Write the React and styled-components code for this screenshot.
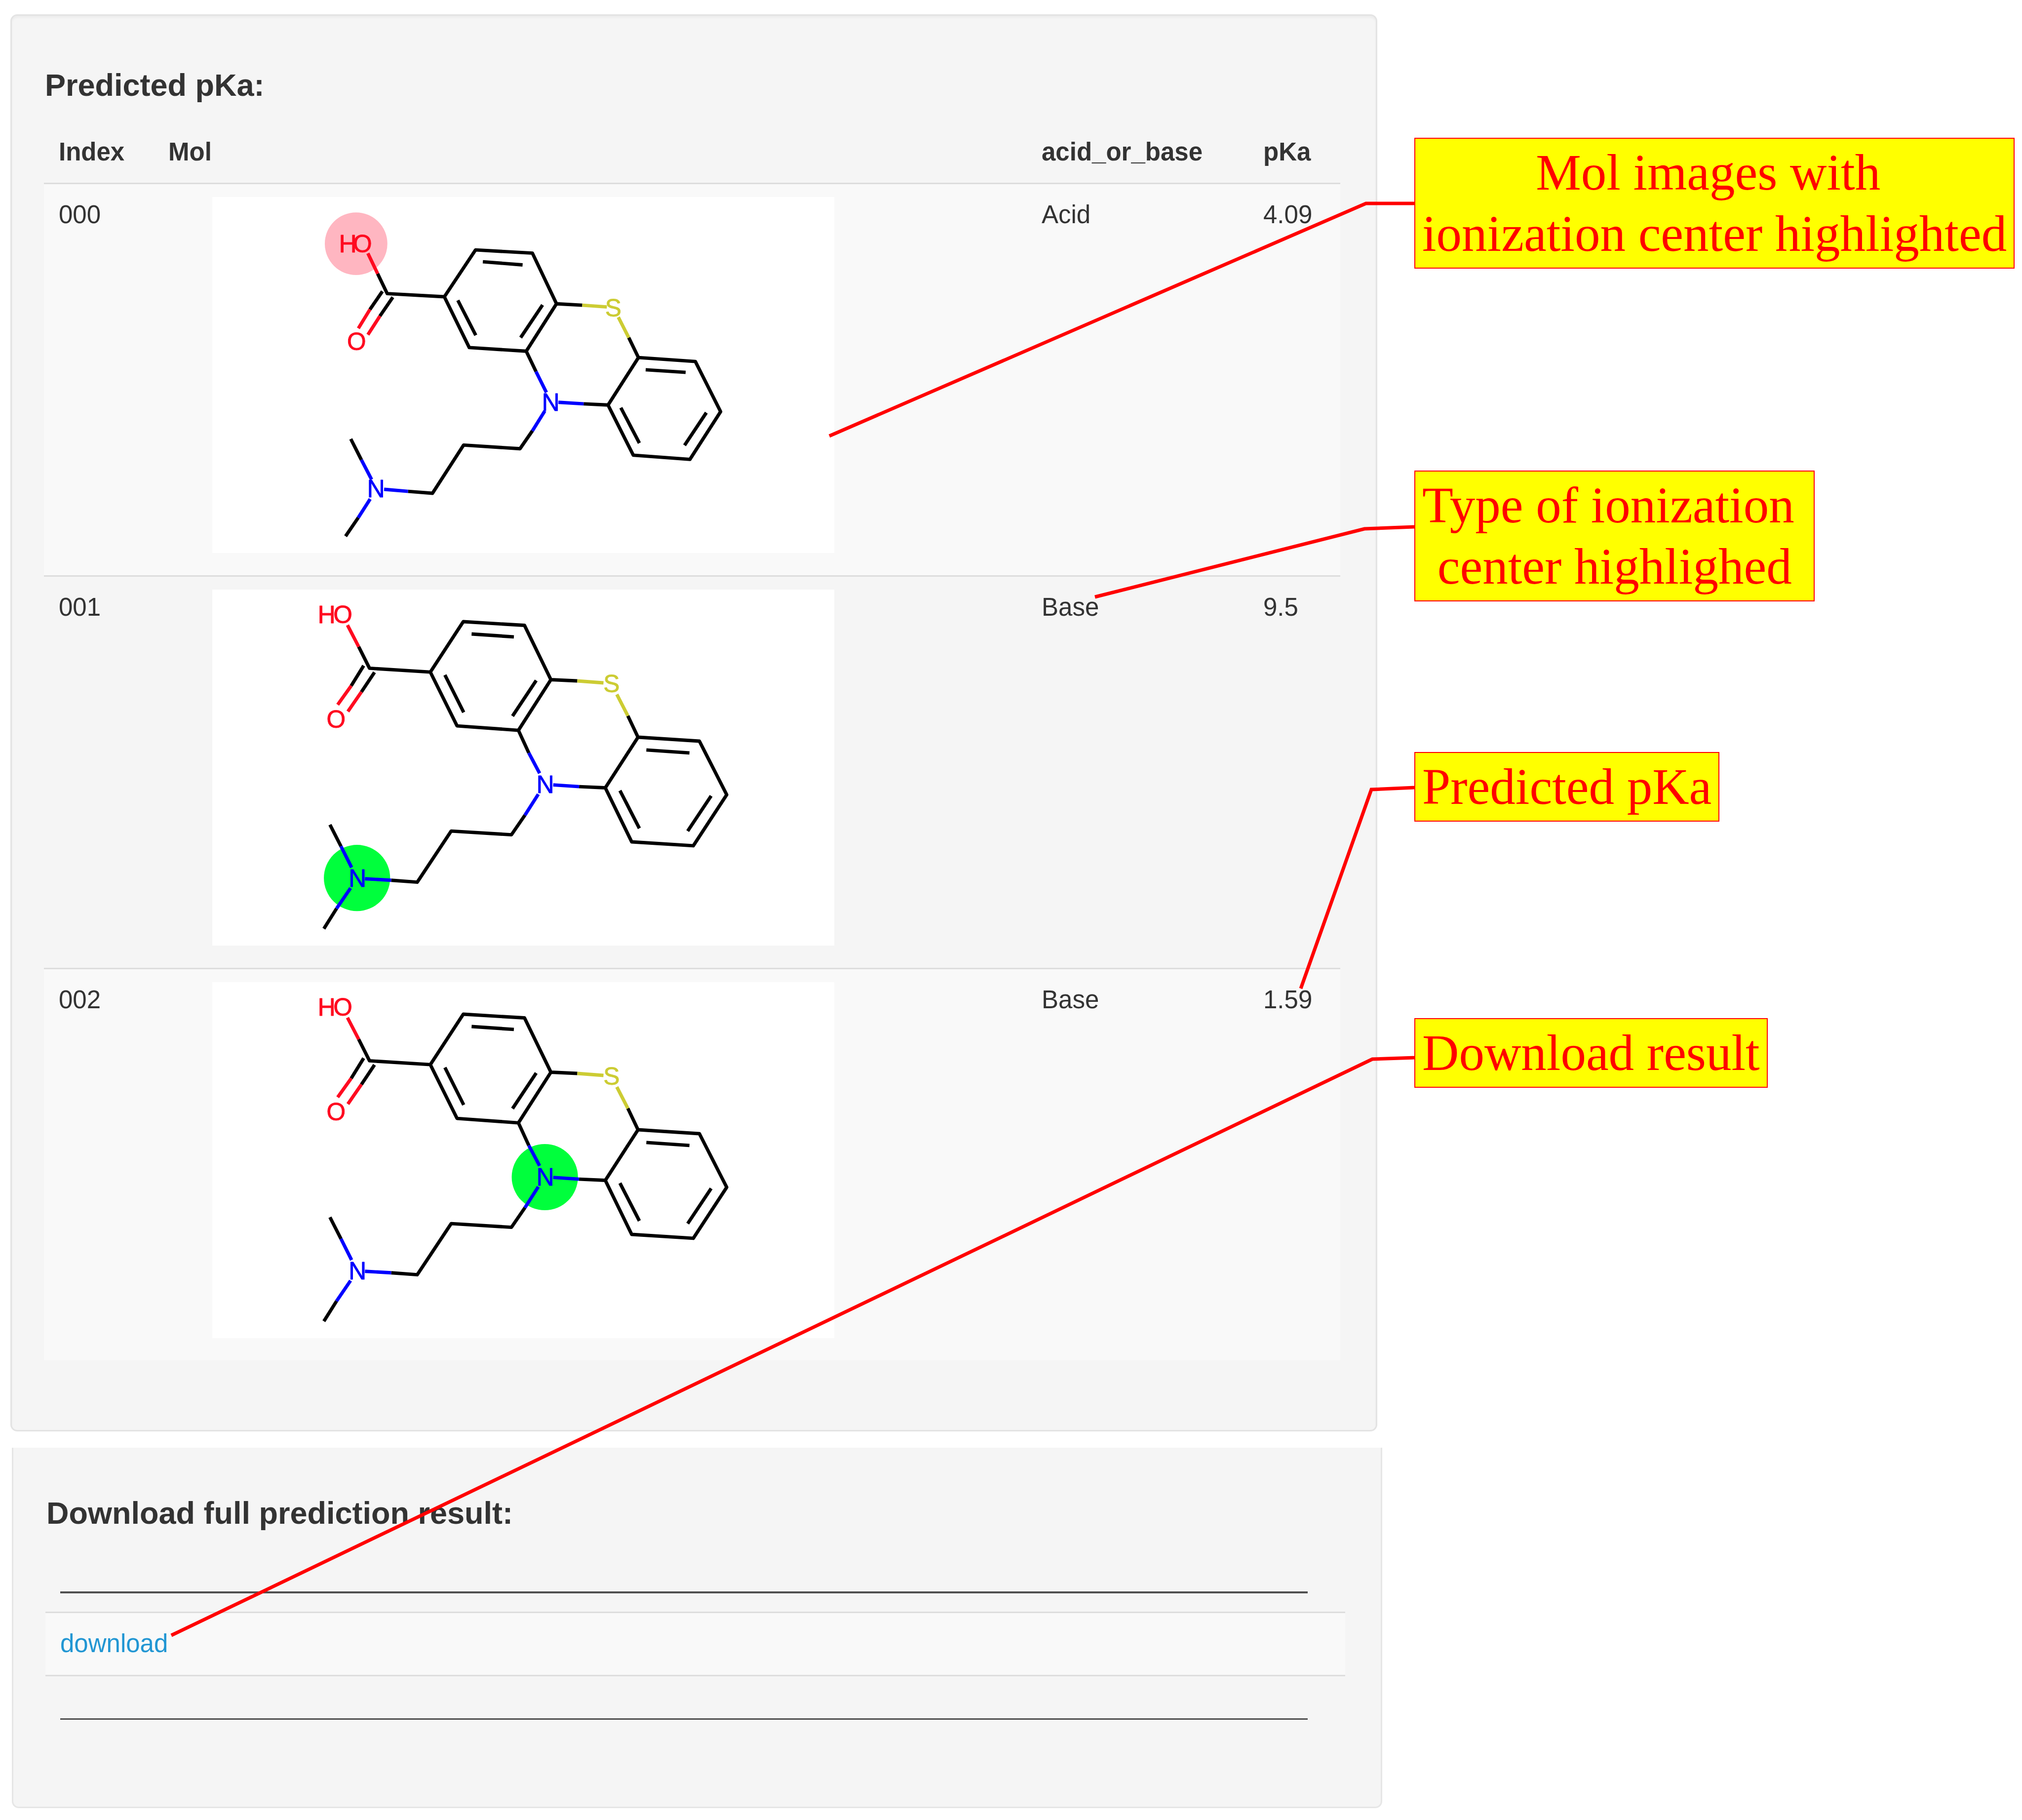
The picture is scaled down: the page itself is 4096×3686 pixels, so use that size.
import React from "react";
import styled, { createGlobalStyle } from "styled-components";

const GlobalStyle = createGlobalStyle`
  * { box-sizing: border-box; }
  body {
    margin: 0;
    background: #ffffff;
    color: #333333;
    font-family: "Liberation Sans", Arial, sans-serif;
  }
`;

const Page = styled.div`
  position: relative;
  display: grid;
  grid-template-columns: minmax(0, 1fr) 1231px;
  column-gap: 65px;
  padding: 29px 0 24px 21px;
`;

const Results = styled.main`
  display: flex;
  flex-direction: column;
  gap: 33px;
`;

const Panel = styled.section`
  background: #f5f5f5;
  border: 3px solid #e3e3e3;
  border-radius: 14px;
  padding: 105px 72px 141px 65px;
  margin-right: 10px;
  box-shadow: inset 0 4px 4px rgba(0, 0, 0, 0.04);
`;

const DownloadPanel = styled(Panel)`
  border-top: 0;
  border-color: #e6e6e6;
  border-radius: 0 0 14px 14px;
  padding-top: 97px;
  margin: 0 0 0 3px;
  box-shadow: none;
`;

const Heading = styled.h2`
  margin: 0 0 39px;
  padding-left: 2px;
  font-size: 63px;
  line-height: 70px;
  font-weight: 700;
`;

const Table = styled.table`
  width: 100%;
  table-layout: fixed;
  border-collapse: separate;
  border-spacing: 0;
  font-size: 51px;
  line-height: 72px;
`;

const Col = styled.col`
  width: ${(p) => p.$width || "auto"};
`;

const HeadCell = styled.th`
  padding: 26px 0 26px 30px;
  text-align: left;
  font-weight: 700;
`;

const Cell = styled.td`
  padding: 26px 0 ${(p) => p.$bottom || "27px"} 30px;
  border-top: 3px solid #dddddd;
  vertical-align: top;
`;

const Row = styled.tr`
  background: ${(p) => (p.$striped ? "#f9f9f9" : "transparent")};
`;

const RuleCell = styled.td`
  height: 126px;
  padding: 85px 76px 0 30px;
  border-top: ${(p) => (p.$first ? "0" : "3px solid #dddddd")};
  vertical-align: top;
`;

const Rule = styled.hr`
  margin: 0;
  border: 0;
  height: ${(p) => p.$weight};
  background: #505050;
`;

const DownloadLink = styled.a`
  color: #2196d3;
  text-decoration: none;
`;

const Figure = styled.figure`
  margin: 0 0 0 89px;
  width: 1260px;
  background: #ffffff;
`;

const Drawing = styled.svg`
  display: block;
  width: 100%;
  height: 721px;
  fill: none;
  stroke-width: 7.5;
  stroke-linejoin: round;
  font-family: "Liberation Sans", Arial, sans-serif;
  font-size: 54px;
  text-anchor: middle;

  text {
    stroke-width: 1;
  }
`;

const Notes = styled.aside`
  display: flex;
  flex-direction: column;
  align-items: flex-start;
  padding-top: 250px;
`;

const Note = styled.p`
  margin: 0 0 ${(p) => p.$after || "0"};
  padding: 6px 14px 7px;
  border: 2px solid #ff0000;
  background: #ffff00;
  color: #ff0000;
  font-family: "Liberation Serif", "Times New Roman", serif;
  font-size: 103px;
  line-height: 124px;
  text-align: center;
  white-space: pre;
`;

const Pointers = styled.svg`
  position: absolute;
  top: 0;
  left: 0;
  width: 100%;
  aspect-ratio: 4096 / 3686;
  fill: none;
  stroke: #ff0000;
  stroke-width: 7;
  pointer-events: none;
`;

const RED = "#ff0a20";
const BLUE = "#0000ff";
const SULFUR = "#cccc33";

const highlightedAcid = {
  carbon:
    "M364.5 169L385.6 213L511.5 220L580.3 116.7L705.6 123.7L758.8 235.4L692 340L566.5 332L511.5 220" +
    "M596.4 142.7L684 149.7M541.3 227.8L580.8 304.8M728 238L679.7 310" +
    "M375 208L347.5 248M398 221L369.5 262.5" +
    "M758.8 235.4L815.5 238.6M918 310L939.4 354L1064.8 362.7L1120.5 473.3L1052.8 578.5L928 569.3L872.3 458.7L939.4 354" +
    "M955.3 381L1043.4 386.6M900.6 464.6L941.4 542.7M1089 475.5L1041 547.6" +
    "M872.3 458.7L818.5 456M692 340L713.6 385" +
    "M705.6 515.6L678.3 555L554 547L485.3 653.3L431.5 649" +
    "M305.3 533.5L328.7 579.6M321.8 707L293.8 748",
  oxygen: "M343 124L364.5 169M347.5 248L322 289.6M369.5 262.5L343 303.7",
  sulfur: "M815.5 238.6L869.8 242.4M895 265L918 310",
  nitrogen:
    "M818.5 456L762.8 452.7M713.6 385L736.5 431M733 471.7L705.6 515.6" +
    "M431.5 649L378.7 644.6M328.7 579.6L351.2 623M348 666L321.8 707",
  labels: [
    ["H", 299, 122, RED],
    ["O", 331, 122, RED],
    ["O", 318, 337, RED],
    ["S", 884, 263, SULFUR],
    ["N", 746, 471, BLUE],
    ["N", 361, 662, BLUE],
  ],
};

const highlightedBase = {
  carbon:
    "M322.7 126L346.6 173.5L480.7 182L553.2 70.8L688.2 79L746.4 198.7L674.8 310.4L539.5 300.6L480.7 182" +
    "M571.6 98L664.8 104.4M512.8 188.4L554.2 270.8M714 200.4L661.8 279" +
    "M333.7 167.8L306.2 212.3M357.6 182.5L328.7 225.8" +
    "M746.4 198.7L804.6 201.4M916 278.4L938.4 325.6L1073.7 334.2L1133.9 452.4L1060.3 565L924.5 556.4L866.3 437.2L938.4 325.6" +
    "M956.8 353.7L1051.8 360.2M898.6 443.2L941.4 526.6M1099.6 455L1047.9 532.6" +
    "M866.3 437.2L808.6 434.5M674.8 310.4L697.7 360.2" +
    "M689.2 497.4L659.4 540.7L526.6 532.6L451.8 645.3L394.4 641" +
    "M259.4 518.5L283.7 566.2M274 703.3L246 747.8",
  oxygen: "M298 78.4L322.7 126M306.2 212.3L276.4 254M328.7 225.8L298.9 269",
  sulfur: "M804.6 201.4L862.3 205.8M891.7 231.2L916 278.4",
  nitrogen:
    "M808.6 434.5L751.4 430.7M697.7 360.2L721.5 405.2M718.6 451.3L689.2 497.4" +
    "M394.4 641L336.5 637.8M283.7 566.2L307.1 612.8M304.8 658.3L274 703.3",
  labels: [
    ["H", 252, 74, RED],
    ["O", 288, 74, RED],
    ["O", 273, 305, RED],
    ["S", 880, 226, SULFUR],
    ["N", 734, 449, BLUE],
    ["N", 320, 655, BLUE],
  ],
};

const rows = [
  {
    index: "000",
    type: "Acid",
    pka: "4.09",
    shape: highlightedAcid,
    spot: { cx: 317, cy: 103, r: 69, fill: "#ffb6c1" },
  },
  {
    index: "001",
    type: "Base",
    pka: "9.5",
    shape: highlightedBase,
    spot: { cx: 319, cy: 636, r: 73, fill: "#00ff3c" },
  },
  {
    index: "002",
    type: "Base",
    pka: "1.59",
    shape: highlightedBase,
    spot: { cx: 733, cy: 430, r: 73, fill: "#00ff3c" },
  },
];

function Molecule({ shape, spot }) {
  return (
    <Figure>
      <Drawing viewBox="0 0 1371 785" preserveAspectRatio="none" role="img" aria-label="Molecule">
        <circle {...spot} />
        <path d={shape.carbon} stroke="#000000" />
        <path d={shape.oxygen} stroke={RED} />
        <path d={shape.sulfur} stroke={SULFUR} />
        <path d={shape.nitrogen} stroke={BLUE} />
        {shape.labels.map(([text, x, y, color]) => (
          <text key={`${text}${x}`} x={x} y={y} fill={color} stroke={color}>
            {text}
          </text>
        ))}
      </Drawing>
    </Figure>
  );
}

export default function App() {
  return (
    <>
      <GlobalStyle />
      <Page>
        <Results>
          <Panel>
            <Heading>Predicted pKa:</Heading>
            <Table>
              <colgroup>
                <Col $width="222px" />
                <Col />
                <Col $width="449px" />
                <Col $width="186px" />
              </colgroup>
              <thead>
                <tr>
                  <HeadCell scope="col">Index</HeadCell>
                  <HeadCell scope="col">Mol</HeadCell>
                  <HeadCell scope="col">acid_or_base</HeadCell>
                  <HeadCell scope="col">pKa</HeadCell>
                </tr>
              </thead>
              <tbody>
                {rows.map((row, i) => (
                  <Row key={row.index} $striped={i % 2 === 0}>
                    <Cell>{row.index}</Cell>
                    <Cell $bottom="45px">
                      <Molecule shape={row.shape} spot={row.spot} />
                    </Cell>
                    <Cell>{row.type}</Cell>
                    <Cell>{row.pka}</Cell>
                  </Row>
                ))}
              </tbody>
            </Table>
          </Panel>

          <DownloadPanel>
            <Heading>Download full prediction result:</Heading>
            <Table>
              <tbody>
                <Row>
                  <RuleCell $first>
                    <Rule $weight="4px" />
                  </RuleCell>
                </Row>
                <Row $striped>
                  <Cell>
                    <DownloadLink href="#download">download</DownloadLink>
                  </Cell>
                </Row>
                <Row>
                  <RuleCell>
                    <Rule $weight="3px" />
                  </RuleCell>
                </Row>
              </tbody>
            </Table>
          </DownloadPanel>
        </Results>

        <Notes>
          <Note $after="409px">{"Mol images with \nionization center highlighted"}</Note>
          <Note $after="305px">{"Type of ionization \ncenter highlighed"}</Note>
          <Note $after="398px">Predicted pKa</Note>
          <Note>Download result</Note>
        </Notes>

        <Pointers viewBox="0 0 4096 3686" aria-hidden="true">
          <polyline points="1680,883 2767,412 2865,412" />
          <polyline points="2218,1209 2764,1071 2865,1067" />
          <polyline points="2635,2002 2778,1599 2866,1595" />
          <polyline points="347,3312 2780,2145 2867,2142" />
        </Pointers>
      </Page>
    </>
  );
}
